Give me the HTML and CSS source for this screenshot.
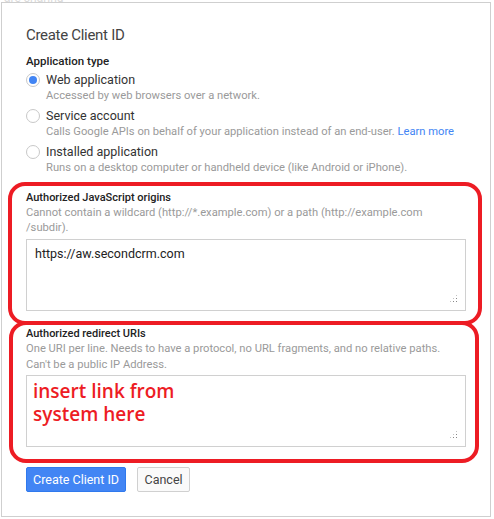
FILE: index.html
```html
<!DOCTYPE html>
<html>
<head>
<meta charset="utf-8">
<link rel="stylesheet" href="styles.css">
</head>
<body>
<div class="bgtext">are sharing</div>
<div class="panel">
  <h1 class="title">Create Client ID</h1>
  <div class="group-label">Application type</div>
  <div class="options">
    <div class="option">
      <span class="radio checked"></span>
      <div class="option-text">
        <div class="option-label">Web application</div>
        <div class="hint">Accessed by web browsers over a network.</div>
      </div>
    </div>
    <div class="option">
      <span class="radio"></span>
      <div class="option-text">
        <div class="option-label">Service account</div>
        <div class="hint">Calls Google APIs on behalf of your application instead of an end-user. <a class="link">Learn more</a></div>
      </div>
    </div>
    <div class="option">
      <span class="radio"></span>
      <div class="option-text">
        <div class="option-label">Installed application</div>
        <div class="hint">Runs on a desktop computer or handheld device (like Android or iPhone).</div>
      </div>
    </div>
  </div>

  <div class="field field-origins">
    <div class="field-label">Authorized JavaScript origins</div>
    <div class="field-hint">Cannot contain a wildcard (http://*.example.com) or a path (http://example.com<br>/subdir).</div>
    <div class="textarea">
      <div class="value">https://aw.secondcrm.com</div>
      <span class="grip"></span>
    </div>
  </div>

  <div class="field field-redirect">
    <div class="field-label">Authorized redirect URIs</div>
    <div class="field-hint hint16">One URI per line. Needs to have a protocol, no URL fragments, and no relative paths.<br>Can't be a public IP Address.</div>
    <div class="textarea textarea-2">
      <div class="note">insert link from</div>
      <div class="note">system here</div>
      <span class="grip"></span>
    </div>
  </div>

  <div class="actions">
    <button class="btn btn-primary">Create Client ID</button>
    <button class="btn btn-default">Cancel</button>
  </div>

  <div class="annot annot-1"></div>
  <div class="annot annot-2"></div>
</div>
</body>
</html>
```
FILE: styles.css
```css
html, body {
  margin: 0;
  padding: 0;
  background: #fff;
}
body {
  font-family: Roboto, "Liberation Sans", Arial, sans-serif;
  position: relative;
  width: 494px;
  height: 519px;
  overflow: hidden;
}
.bgtext {
  position: absolute;
  left: 4px;
  top: -8px;
  font-size: 12px;
  line-height: 12px;
  color: #dadada;
}
.panel {
  position: relative;
  margin: 2px 0 0 1px;
  box-sizing: border-box;
  width: 490px;
  height: 515px;
  border: 1px solid #cfcfcf;
  background: #fff;
  padding: 22px 24px 0 24px;
}
.title {
  margin: 0;
  font-size: 15px;
  font-weight: 400;
  line-height: 20px;
  color: #444;
  letter-spacing: -0.3px;
}
.group-label {
  margin-top: 8px;
  font-size: 11.5px;
  font-weight: 500;
  line-height: 16px;
  color: #222;
}
.options {
  margin-top: 3px;
  display: flex;
  flex-direction: column;
  gap: 4px;
}
.option {
  display: flex;
  align-items: flex-start;
  gap: 6px;
}
.radio {
  flex: none;
  width: 14px;
  height: 14px;
  box-sizing: border-box;
  border-radius: 50%;
  border: 1px solid #c8c8c8;
  background: #fff;
  margin-top: 1px;
  position: relative;
}
.radio.checked::after {
  content: "";
  position: absolute;
  left: 2px;
  top: 2px;
  width: 8px;
  height: 8px;
  border-radius: 50%;
  background: #4285f4;
}
.option-label {
  font-size: 12.5px;
  line-height: 16px;
  color: #333;
}
.hint {
  font-size: 11.2px;
  line-height: 16px;
  color: #9a9a9a;
}
.link {
  color: #4285f4;
  cursor: pointer;
}
.field-origins {
  margin-top: 15px;
}
.field-redirect {
  margin-top: 16px;
}
.field-label {
  font-size: 11px;
  font-weight: 500;
  line-height: 14px;
  color: #222;
}
.field-hint {
  font-size: 11.2px;
  line-height: 15px;
  color: #9a9a9a;
}
.field-hint.hint16 {
  line-height: 16px;
}
.textarea {
  position: relative;
  margin-top: 4px;
  height: 72px;
  box-sizing: border-box;
  border: 1px solid #d0d0d0;
  padding: 5px 8px;
}
.textarea-2 {
  margin-top: 2px;
  padding-top: 4px;
}
.value {
  font-size: 12.5px;
  line-height: 18px;
  color: #222;
}
.note {
  font-family: "Open Sans", "Noto Sans", sans-serif;
  font-size: 19px;
  font-weight: 600;
  line-height: 23px;
  height: 23px;
  color: #ed1c24;
  margin-left: -2px;
}
.grip {
  position: absolute;
  right: 7px;
  bottom: 7px;
  width: 9px;
  height: 9px;
  background:
    radial-gradient(circle, #888 0.7px, transparent 1px) 0 0 / 3px 3px;
  clip-path: polygon(100% 0, 100% 100%, 0 100%);
}
.actions {
  margin-top: 20px;
  display: flex;
  gap: 11px;
}
.btn {
  height: 25px;
  box-sizing: border-box;
  font-family: Roboto, "Liberation Sans", Arial, sans-serif;
  font-size: 12.5px;
  border-radius: 2px;
  padding: 0 6px;
  line-height: 23px;
  white-space: nowrap;
}
.btn-primary {
  background: #4285f4;
  border: 1px solid #3079ed;
  color: #fff;
  min-width: 100px;
}
.btn-default {
  background: #fafafa;
  border: 1px solid #d0d0d0;
  color: #444;
  min-width: 53px;
}
.annot {
  position: absolute;
  border: 4.5px solid #ed1c24;
  border-radius: 17px;
  box-sizing: border-box;
}
.annot-1 {
  left: 6px;
  top: 179px;
  width: 474px;
  height: 143px;
}
.annot-2 {
  left: 7px;
  top: 318px;
  width: 470px;
  height: 142px;
}
```
